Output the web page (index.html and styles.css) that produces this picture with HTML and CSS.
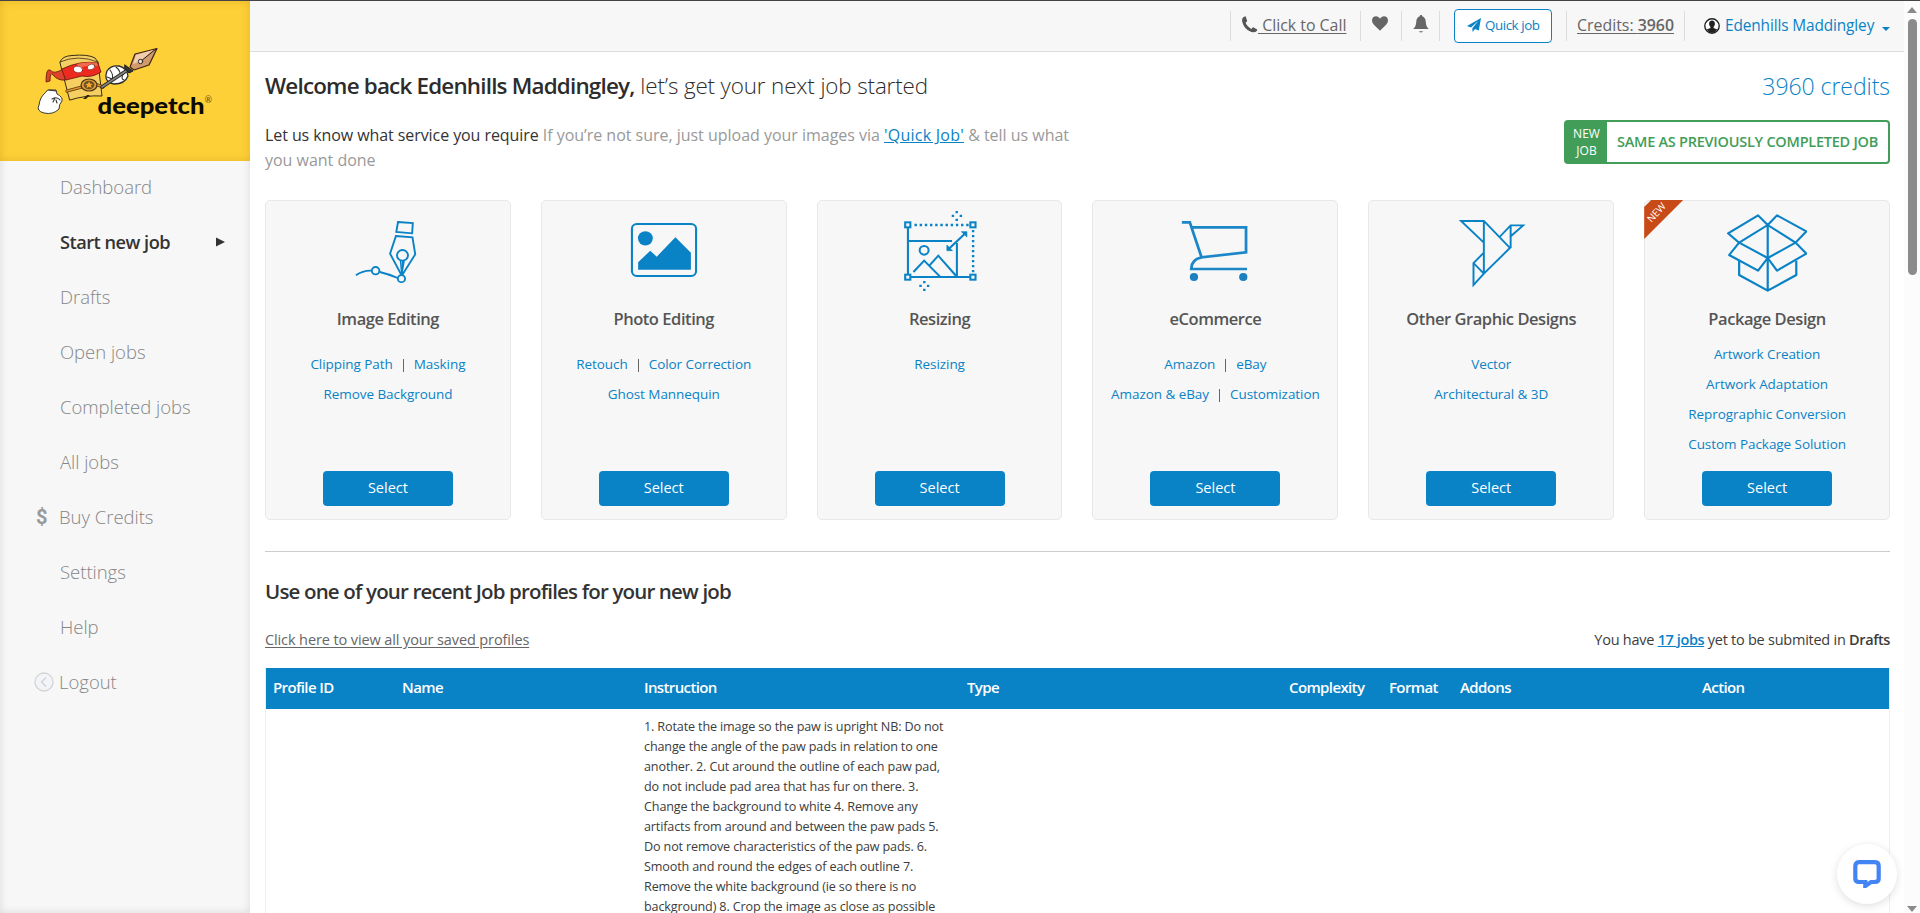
FILE: index.html
```html
<!DOCTYPE html>
<html lang="en">
<head>
<meta charset="utf-8">
<title>deepetch - Start new job</title>
<link rel="stylesheet" href="styles.css">
</head>
<body>
<div class="app">
  <aside class="sidebar">
    <div class="brand">
      <svg viewBox="0 0 250 160" width="250" height="160">
        <g stroke-linejoin="round" stroke-linecap="round">
          <path d="M60 61 Q62 55 72 54.500 Q88 53 95 57 L98 61 L102 95 Q86 94 70 99 Z" fill="#f6cf62" stroke="#3a2d14" stroke-width="1"/>
          <path d="M60 61 Q78 53 98 61" fill="none" stroke="#3a2d14" stroke-width=".8"/>
          <path d="M63 68 Q54 74 50 69 Q46 67 46 81 L50 80 Q50 70 53 74 Q58 80 65 79 Z" fill="#e0432b" stroke="#5b150c" stroke-width=".8"/>
          <path d="M62 68 Q80 59 98 62 L101 71 Q92 77 82 75 L66 79 Z" fill="#ee2a20" stroke="#5b150c" stroke-width=".8"/>
          <path d="M77 63 Q88 60 97 62 L98 65 Q88 64 78 67Z" fill="#f4694c"/>
          <ellipse cx="78" cy="68.500" rx="4.600" ry="3.200" fill="#fff" stroke="#6b1a12" stroke-width=".6" transform="rotate(12 78 68.500)"/>
          <ellipse cx="91" cy="66" rx="3.800" ry="2.600" fill="#fff" stroke="#6b1a12" stroke-width=".6" transform="rotate(-20 91 66)"/>
          <path d="M67 90 L82 86 M95 83 L103 86" stroke="#5d3b12" stroke-width="3.200"/>
          <path d="M67 90 L82 86 M95 83 L102 85.500" stroke="#e0922e" stroke-width="1.800"/>
          <ellipse cx="89" cy="84" rx="8" ry="6" fill="#d69b3c" stroke="#4d3210" stroke-width="1.200"/>
          <ellipse cx="89" cy="84" rx="5.300" ry="4.200" fill="#6e5324"/>
          <path d="M89 80.500l1.200 2.300 2.600.2-2 1.600.8 2.500-2.600-1.300-2.500 1.300.7-2.500-2-1.600 2.700-.2z" fill="#f7a92b"/>
          <path d="M83 98 L87 94 L90 94 L86 98Z" fill="#2c2410"/>
          <path d="M107 70 Q111 64 119 65 Q127 67 128 75 Q125 83 114 83 Q103 81 107 70Z" fill="#fff" stroke="#2d2d2d" stroke-width="1.300"/>
          <path d="M110 69 Q114 74 112 79 M116 66 Q121 70 120 75 M124 72 Q120 78 124 79 M107 76 L112 78" fill="none" stroke="#333" stroke-width="1.100"/>
          <path d="M102 86 L126 70" stroke="#222" stroke-width="3.400"/><path d="M102 86 L126 70" stroke="#85837f" stroke-width="1.700"/>
          <path d="M125 64 L133 70 L129 72 L125 68Z" fill="#333" stroke="#222"/>
          <path d="M130 66 L135 53 L157 47.500 L149 64 L134 69Z" fill="#d09a6c" stroke="#3b2416" stroke-width="1.200"/>
          <path d="M133 63 L136 54 L153 49 L141 60Z" fill="#f2ceae"/>
          <path d="M156 48 L141 60" fill="none" stroke="#2e201b" stroke-width="1"/>
          <circle cx="140.500" cy="60.500" r="2.200" fill="#f4dfcf" stroke="#2b2422"/>
          <path d="M48 89 L56 89 L57 93 Q63 96 62 100 Q59 103 59 108 Q53 114 44 112 Q36 110 39 104 Q40 96 45 92Z" fill="#fff" stroke="#383838" stroke-width="1"/>
          <path d="M49 89 L56 90 M52 98 Q57 95 60 99 M53 101 L55 97 M57 102 L56 99" fill="none" stroke="#333" stroke-width="1.100"/>
        </g>
        <text class="brand-name" x="97.500" y="112.500" textLength="107" lengthAdjust="spacingAndGlyphs">deepetch</text>
        <text class="brand-mark" x="204.500" y="102">®</text>
      </svg>
    </div>
    <nav class="nav">
      <a><i></i>Dashboard</a>
      <a class="active"><i></i>Start new job<svg class="arrow" viewBox="0 0 9 10" width="9" height="10"><path d="M0 0.500 9 5 0 9.500z" fill="#333"/></svg></a>
      <a><i></i>Drafts</a>
      <a><i></i>Open jobs</a>
      <a><i></i>Completed jobs</a>
      <a><i></i>All jobs</a>
      <a class="iconed"><i class="dollar">$</i>Buy Credits</a>
      <a><i></i>Settings</a>
      <a><i></i>Help</a>
      <a class="iconed"><i><svg viewBox="0 0 20 20" width="20" height="20"><circle cx="10" cy="10" r="9" fill="#f3f4f8" stroke="#d3d3d6" stroke-width="1.300"/><path d="M12 5.500 7.500 10 12 14.500" fill="none" stroke="#cfd0d4" stroke-width="1.200"/></svg></i>Logout</a>
    </nav>
  </aside>

  <div class="page">
    <header class="topbar">
      <a class="cell call"><svg viewBox="0 0 16 17" width="17" height="17"><path d="M3.600.4C1.300.9.300 2.600.6 4.900 1.500 10.500 6.200 15.600 12 16.300c1.700.1 3.100-.6 3.700-2.200.1-.4 0-.6-.3-.8l-3.300-1.900c-.4-.2-.7-.1-1 .2l-1.200 1.300C7.400 11.700 5.200 9.400 4.100 6.800l1.300-1.200c.3-.3.300-.5.2-.9L4.300.8C4.200.5 4 .3 3.600.4z" fill="#555"/></svg><u>&nbsp;Click to Call</u></a>
      <a class="cell heart"><svg viewBox="0 0 16 15" width="16" height="15"><path d="M8 14.800C5 11.500 0 8.500 0 4.300 0 1.800 1.800.2 4 .2c1.700 0 3.200.9 4 2.500C8.800 1.100 10.300.2 12 .2c2.200 0 4 1.600 4 4.100 0 4.200-5 7.200-8 10.500z" fill="#666"/></svg></a>
      <a class="cell bell"><svg viewBox="0 0 16 18" width="16" height="18"><path d="M8 0c.8 0 1.200.5 1.200 1.200 2.300.8 3.300 2.600 3.500 5 .2 3.800 1 6 3.100 7.800H.2c2.100-1.800 2.900-4 3.100-7.800.2-2.400 1.200-4.200 3.500-5C6.800.5 7.200 0 8 0z" fill="#666"/><path d="M6 16.200h4c-.5 1.600-3.500 1.600-4 0z" fill="#666"/></svg></a>
      <div class="cell quick"><a class="quick-btn"><svg viewBox="0 0 14 14" width="14" height="14"><path d="M14 0 11.800 12.600 8 11 5.600 14 5.300 10.200 11.500 2.800 4 9.500 0 8z" fill="#0a82c6"/></svg>Quick job</a></div>
      <a class="cell credits"><u>Credits: <b>3960</b></u></a>
      <a class="cell user"><svg viewBox="0 0 16 16" width="16" height="16"><circle cx="8" cy="8" r="7.200" fill="#fff" stroke="#222" stroke-width="1.400"/><path d="M8 2.500c2 0 3 1.400 2.900 3.300 0 1.300-.6 2.300-1.300 2.900v1.400l3.700 1.500Q11.300 14.700 8 15q-3.300-.3-5.300-3.400l3.700-1.500V8.700C5.700 8.100 5.100 7.100 5.100 5.800 5 3.900 6 2.500 8 2.500z" fill="#222"/></svg><span>Edenhills Maddingley</span><svg class="caret" viewBox="0 0 8 4" width="8" height="4"><path d="M0 0h8L4 4z" fill="#0a82c6"/></svg></a>
    </header>

    <main class="content">
      <section class="intro">
        <div class="intro-text">
          <h1><b>Welcome back Edenhills Maddingley,</b> <span>let’s get your next job started</span></h1>
          <p><strong>Let us know what service you require</strong> If you’re not sure, just upload your images via <a>'Quick Job'</a> &amp; tell us what<br>you want done</p>
        </div>
        <div class="intro-side">
          <div class="balance">3960 credits</div>
          <a class="repeat"><span class="repeat-tag">NEW<br>JOB</span><span class="repeat-label">SAME AS PREVIOUSLY COMPLETED JOB</span></a>
        </div>
      </section>

      <section class="cards">
        <article class="card">
          <svg viewBox="255 39 232 252" width="80" height="84" preserveAspectRatio="none"><g fill="none" stroke="#0a82c6" stroke-width="5.500"><path d="M400 81 443 84 441 115 395 111z"/><path d="M394 123 442 127 450 178 411 242 377 176z"/><circle cx="413" cy="181" r="16"/><path d="M407 196 411 238 418 196M413 198V236" stroke-width="4"/><path d="M278 241Q298 226 323 227M347 231Q372 237 399 249"/><circle cx="335" cy="227" r="11"/><circle cx="410" cy="251" r="10.500" fill="#f7f7f7"/></g></svg>
          <h3>Image Editing</h3>
          <div class="links"><div><a>Clipping Path</a><s></s><a>Masking</a></div><div><a>Remove Background</a></div></div>
          <button>Select</button>
        </article>
        <article class="card">
          <svg viewBox="1057 39 232 252" width="80" height="84" preserveAspectRatio="none"><rect x="1080" y="87" width="186" height="156" rx="14" fill="none" stroke="#0a82c6" stroke-width="6"/><circle cx="1119" cy="130" r="21.500" fill="#0a82c6"/><path d="M1098 224V202L1133 167 1152 185 1206 127 1251 173V224z" fill="#0a82c6"/></svg>
          <h3>Photo Editing</h3>
          <div class="links"><div><a>Retouch</a><s></s><a>Color Correction</a></div><div><a>Ghost Mannequin</a></div></div>
          <button>Select</button>
        </article>
        <article class="card">
          <svg viewBox="260 39 232 252" width="80" height="84" preserveAspectRatio="none"><g fill="none" stroke="#0a82c6" stroke-width="6"><rect x="275" y="82" width="15" height="15"/><rect x="464" y="82" width="15" height="15"/><rect x="275" y="239" width="15" height="15"/><rect x="464" y="239" width="15" height="15"/><path d="M283 99V237M285 138H411M425 144V243M292 246H463"/><circle cx="330" cy="166" r="13"/><path d="M299 231 330 197 376 245M345 212 371 182 423 243"/><path d="M402 161 448 116"/><path d="M302 90H462M472 105V238" stroke-width="7" stroke-dasharray="7 8"/></g><path d="M438 110H454V126zM396 150V167H412z" fill="#0a82c6" stroke="#0a82c6" stroke-width="2"/><path d="M421 48h7v7h-7zM421 71h7v7h-7zM410 59h7v7h-7zM433 59h7v7h-7zM327 258h7v7h-7zM327 281h7v7h-7zM316 269h7v7h-7zM338 269h7v7h-7z" fill="#0a82c6"/></svg>
          <h3>Resizing</h3>
          <div class="links"><div><a>Resizing</a></div></div>
          <button>Select</button>
        </article>
        <article class="card">
          <svg viewBox="1060 39 232 252" width="80" height="84" preserveAspectRatio="none"><g fill="none" stroke="#1b86c8" stroke-width="8"><path d="M1080 82H1103L1137 187 1266 172V97H1110"/><path d="M1137 187C1118 191 1107 203 1107 222H1269"/></g><circle cx="1115" cy="246" r="12" fill="#1b7fc0"/><circle cx="1258" cy="246" r="12" fill="#1b7fc0"/></svg>
          <h3>eCommerce</h3>
          <div class="links"><div><a>Amazon</a><s></s><a>eBay</a></div><div><a>Amazon &amp; eBay</a><s></s><a>Customization</a></div></div>
          <button>Select</button>
        </article>
        <article class="card">
          <svg viewBox="255 39 224 252" width="80" height="84" preserveAspectRatio="none"><g fill="none" stroke="#0a82c6" stroke-width="5.500"><path d="M347 236 420 159 347 78H283L347 143M347 78V236L318 270V204L347 173M318 204 347 236M391 126 422 91H457L420 126M422 91V159"/></g></svg>
          <h3>Other Graphic Designs</h3>
          <div class="links"><div><a>Vector</a></div><div><a>Architectural &amp; 3D</a></div></div>
          <button>Select</button>
        </article>
        <article class="card package">
          <div class="ribbon"><span>NEW</span></div>
          <svg viewBox="1028 39 224 252" width="80" height="84" preserveAspectRatio="none"><g fill="none" stroke="#0a82c6" stroke-width="6.200" stroke-linejoin="round"><path d="M1142 90 1115 61 1031 115 1062 143zM1142 90 1168 61 1250 109 1220 143zM1062 143 1142 189 1115 227 1034 180zM1220 143 1142 189 1168 227 1250 176z"/><path d="M1142 90V286M1062 197V240L1142 287 1222 240V197"/></g></svg>
          <h3>Package Design</h3>
          <div class="links"><div><a>Artwork Creation</a></div><div><a>Artwork Adaptation</a></div><div><a>Reprographic Conversion</a></div><div><a>Custom Package Solution</a></div></div>
          <button>Select</button>
        </article>
      </section>

      <section class="profiles">
        <h2>Use one of your recent Job profiles for your new job</h2>
        <div class="profiles-bar">
          <a class="all-profiles">Click here to view all your saved profiles</a>
          <div class="drafts">You have <a>17 jobs</a> yet to be submited in <b>Drafts</b></div>
        </div>
        <div class="table">
          <div class="row head"><span>Profile ID</span><span>Name</span><span>Instruction</span><span>Type</span><span>Complexity</span><span>Format</span><span>Addons</span><span>Action</span></div>
          <div class="row body"><span></span><span></span><span>1. Rotate the image so the paw is upright NB: Do not<br>change the angle of the paw pads in relation to one<br>another. 2. Cut around the outline of each paw pad,<br>do not include pad area that has fur on there. 3.<br>Change the background to white 4. Remove any<br>artifacts from around and between the paw pads 5.<br>Do not remove characteristics of the paw pads. 6.<br>Smooth and round the edges of each outline 7.<br>Remove the white background (ie so there is no<br>background) 8. Crop the image as close as possible</span></div>
        </div>
      </section>
    </main>
  </div>

  <div class="scrollbar">
    <svg viewBox="0 0 10 6" width="10" height="6"><path d="M5 0 10 6H0z" fill="#8a8a8a"/></svg>
    <div class="thumb"></div>
    <svg viewBox="0 0 10 6" width="10" height="6"><path d="M0 0H10L5 6z" fill="#8a8a8a"/></svg>
  </div>

  <div class="chat"><svg viewBox="0 0 28 28" width="28" height="28"><path d="M6 2.200h16q3.700 0 3.700 4v12.500q0 3-3.700 3.300h-4L12.300 26v-4H6q-3.700-.3-3.700-3.300V6.200q0-4 3.700-4z" fill="none" stroke="#4384f5" stroke-width="4.200"/></svg></div>
</div>
</body>
</html>
```
FILE: styles.css
```css
* { box-sizing: border-box; }
body {
  margin: 0;
  font-family: "Open Sans", sans-serif;
  font-weight: 400;
  color: #3c3c3c;
  background: #fff;
}
svg { display: block; flex: none; }
.app {
  position: relative;
  display: flex;
  width: 1920px;
  height: 913px;
  overflow: hidden;
  border-top: 1px solid #454347;
}

/* Sidebar */
.sidebar {
  flex: none;
  width: 250px;
  background: #f7f7f7;
  box-shadow: inset 0 0 8px rgba(0, 0, 0, .12);
}
.brand {
  height: 160px;
  background: #fdd037;
  box-shadow: inset 0 0 8px rgba(150, 100, 0, .25);
}
.brand-name { font: 900 23px Lato, sans-serif; fill: #0c0a02; }
.brand-mark { font: 9px Lato, sans-serif; fill: #5e4c10; }
.nav a {
  display: flex;
  align-items: center;
  height: 55px;
  padding-left: 34px;
  font-size: 18.5px;
  font-weight: 300;
  letter-spacing: -.02px;
  color: #868686;
}
.nav a:first-child { margin-top: -2px; }
.nav i { display: block; flex: none; width: 26px; font-style: normal; }
.nav .iconed i { width: 25px; }
.nav .dollar { padding-left: 2px; font: 700 20px Roboto, sans-serif; color: #999; }
.nav .active { font-size: 18.2px; font-weight: 600; letter-spacing: -.5px; color: #333; }
.nav .arrow { margin-left: auto; margin-right: 25px; }

/* Top bar */
.page { flex: none; width: 1654px; }
.topbar {
  display: flex;
  justify-content: flex-end;
  align-items: center;
  height: 51px;
  border-bottom: 1px solid #ddd;
  background: #f7f7f7;
  font-size: 15.9px;
  color: #666;
}
.cell {
  display: flex;
  align-items: center;
  height: 30px;
  border-left: 1px solid #ddd;
  white-space: nowrap;
}
.call { width: 130px; padding-left: 10px; }
.call svg { margin-top: -3px; }
.call u, .credits u { margin-top: -2px; text-underline-offset: 2px; text-decoration-thickness: 1px; }
.heart { width: 41px; padding: 0 0 5px 11px; }
.bell { width: 38px; padding: 0 0 5px 11px; }
.quick { width: 127px; padding-left: 14px; }
.quick-btn {
  display: flex;
  align-items: center;
  gap: 4px;
  width: 98px;
  height: 34px;
  padding: 0 0 2px 12px;
  border: 1px solid #0a82c6;
  border-radius: 4px;
  background: #fff;
  font-size: 13.4px;
  letter-spacing: -.45px;
  color: #0a82c6;
}
.credits { width: 118px; padding-left: 10px; letter-spacing: 0; }
.credits b { font-weight: 600; }
.user { width: 220px; padding-left: 19px; color: #0a82c6; font-size: 15.4px; }
.user span { width: 157px; margin-top: -1px; padding-left: 5px; letter-spacing: -.12px; }
.caret { margin: 5px 0 0 5px; }

/* Intro */
.content { padding: 17px 14px 0 15px; }
.intro { display: flex; justify-content: space-between; height: 131px; }
.intro-text { width: 840px; }
.intro h1 { margin: 0; font-size: 22.400px; line-height: 34px; font-weight: 300; color: #2c2c2c; white-space: nowrap; }
.intro h1 b { font-weight: 600; letter-spacing: -.8px; }
.intro h1 span { letter-spacing: -.13px; }
.intro p { margin: 20px 0 0; font-size: 16px; line-height: 25px; letter-spacing: -.02px; color: #999; white-space: nowrap; }
.intro p strong { font-weight: 400; letter-spacing: -.08px; color: #333; }
.intro p a { letter-spacing: .25px; color: #0a82c6; text-decoration: underline; }
.intro-side { display: flex; flex-direction: column; align-items: flex-end; }
.balance { height: 51px; font-size: 23px; font-weight: 300; line-height: 35px; letter-spacing: -.05px; color: #0a82c6; }
.repeat {
  display: flex;
  width: 326px;
  height: 44px;
  border: 2px solid #429d58;
  border-radius: 4px;
  color: #429d58;
  white-space: nowrap;
}
.repeat-tag {
  width: 41px;
  padding-top: 3px;
  background: #429d58;
  color: #fff;
  font-size: 12px;
  line-height: 17px;
  text-align: center;
}
.repeat-label { flex: 1; text-align: center; font-size: 14.500px; font-weight: 600; letter-spacing: -.25px; line-height: 40px; }

/* Service cards */
.cards { display: grid; grid-template-columns: repeat(6, 1fr); gap: 30px; }
.card {
  position: relative;
  display: flex;
  flex-direction: column;
  align-items: center;
  height: 320px;
  padding: 7px 0 13px;
  border: 1px solid #e8e8e8;
  border-radius: 5px;
  background: #f7f7f7;
}
.card h3 { margin: 15px 0 18px; font-size: 16.500px; line-height: 24px; font-weight: 600; letter-spacing: -.45px; color: #555; }
.package h3 { margin-bottom: 8px; }
.links { font-size: 13.500px; line-height: 30px; letter-spacing: -.06px; color: #0a82c6; white-space: nowrap; }
.links div { display: flex; justify-content: center; }
.links s { width: 1px; height: 13px; margin: 10px 10px 0; background: #666; }
.card button {
  width: 130px;
  height: 35px;
  margin-top: auto;
  padding: 0 0 2px;
  border: 0;
  border-radius: 4px;
  background: #0a82c6;
  color: #fff;
  font: 400 14.500px "Open Sans", sans-serif;
}
.ribbon {
  position: absolute;
  top: -1px;
  left: -1px;
  width: 39px;
  height: 39px;
  background: #c84a16;
  clip-path: polygon(0 7px, 7px 0, 39px 0, 0 39px);
}
.ribbon span {
  display: block;
  width: 25px;
  text-align: center;
  font-size: 10px;
  line-height: 25px;
  color: #fff;
  transform: rotate(-47deg);
}

/* Recent profiles */
.profiles { margin-top: 31px; border-top: 1px solid #ccc; }
.profiles h2 { margin: 24px 0 0; font-size: 20.500px; line-height: 30px; font-weight: 600; letter-spacing: -.84px; color: #333; }
.profiles-bar { display: flex; justify-content: space-between; margin-top: 22px; font-size: 14.500px; line-height: 24px; letter-spacing: -.11px; }
.all-profiles { color: #666; text-decoration: underline; text-underline-offset: 2px; }
.drafts { letter-spacing: -.25px; }
.drafts b, .drafts a { font-weight: 600; letter-spacing: -.4px; }
.drafts a { color: #0a82c6; text-decoration: underline; }
.table { margin-top: 16px; border: 1px solid #eee; border-top: 0; }
.row { display: grid; grid-template-columns: 129px 242px 323px 322px 100px 71px 242px 1fr; }
.row span { padding-left: 7px; white-space: nowrap; }
.head { height: 41px; background: #0a82c6; color: #fff; font-size: 15px; font-weight: 600; letter-spacing: -.62px; line-height: 38px; }
.body { height: 300px; padding-top: 8px; font-size: 12.600px; line-height: 20px; letter-spacing: -.14px; }

/* Window scrollbar */
.scrollbar {
  display: flex;
  flex-direction: column;
  align-items: center;
  width: 16px;
  padding: 6px 0 1px;
  background: #fcfcfc;
}
.thumb { width: 9px; height: 256px; margin: 6px 0 auto; border-radius: 5px; background: #8b8b8b; }

/* Chat launcher */
.chat {
  position: absolute;
  left: 1837px;
  top: 843px;
  display: flex;
  align-items: center;
  justify-content: center;
  width: 60px;
  height: 60px;
  border-radius: 50%;
  background: #fff;
  box-shadow: 0 2px 8px rgba(0, 0, 0, .13);
}
```
